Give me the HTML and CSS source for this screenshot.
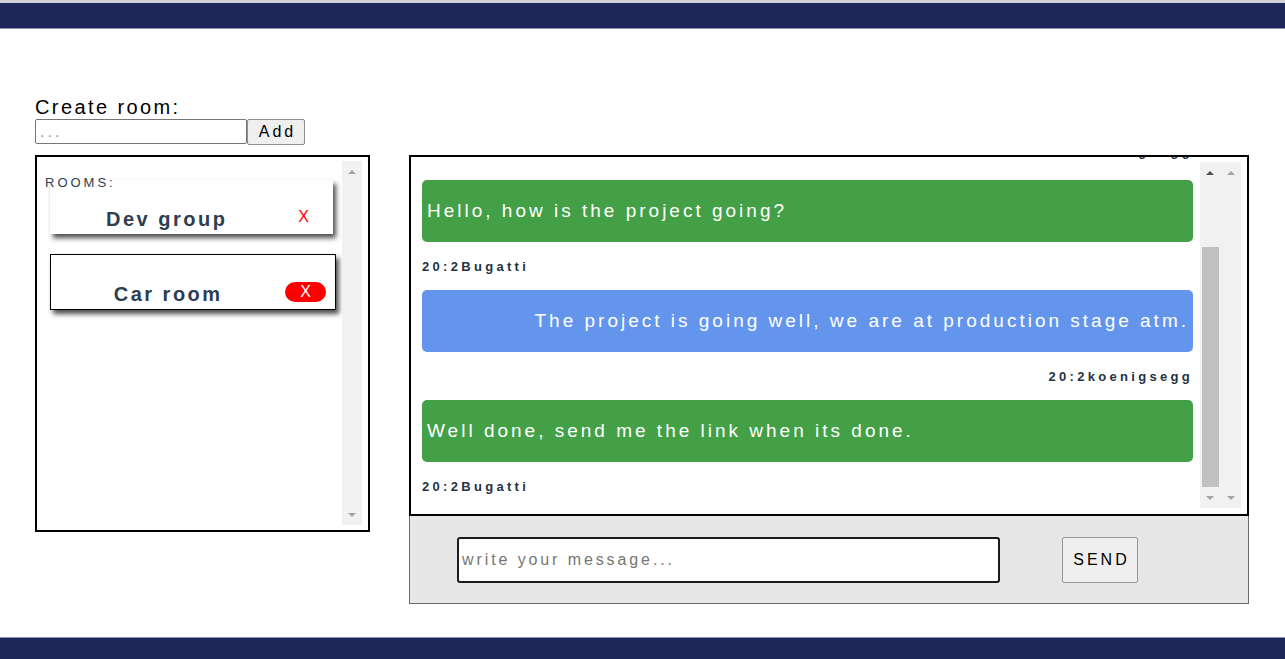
FILE: index.html
```html
<!DOCTYPE html>
<html lang="en">
<head>
<meta charset="utf-8">
<title>Chat</title>
<link rel="stylesheet" href="styles.css">
</head>
<body>
<div class="topstrip"></div>
<header class="topbar"></header>
<main class="main">
  <form class="create">
    <label class="create-label" for="room">Create room:</label>
    <div class="create-row">
      <input id="room" class="create-input" type="text" placeholder="...">
      <button type="button" class="add-btn">Add</button>
    </div>
  </form>
  <div class="panels">
    <section class="rooms">
      <div class="rooms-list">
        <p class="rooms-title">ROOMS:</p>
        <div class="room">
          <h3 class="room-name">Dev group</h3>
          <button type="button" class="room-del">X</button>
        </div>
        <div class="room room-active">
          <h3 class="room-name">Car room</h3>
          <button type="button" class="room-del">X</button>
        </div>
      </div>
      <div class="vscroll vscroll-rooms">
        <span class="sb-btn"><i class="tri tri-up"></i></span>
        <span class="sb-track"></span>
        <span class="sb-btn"><i class="tri tri-down"></i></span>
      </div>
    </section>
    <section class="chat">
      <div class="chat-box">
        <div class="messages">
          <div class="meta meta-right meta-top">20:2koenigsegg</div>
          <div class="msg msg-other">
            <div class="bubble bubble-green">Hello, how is the project going?</div>
            <div class="meta">20:2Bugatti</div>
          </div>
          <div class="msg msg-me">
            <div class="bubble bubble-blue">The project is going well, we are at production stage atm.</div>
            <div class="meta meta-right">20:2koenigsegg</div>
          </div>
          <div class="msg msg-other">
            <div class="bubble bubble-green">Well done, send me the link when its done.</div>
            <div class="meta">20:2Bugatti</div>
          </div>
        </div>
        <div class="vscroll vscroll-chat">
          <span class="sb-btn"><i class="tri tri-up tri-dark"></i></span>
          <span class="sb-track"><span class="sb-thumb"></span></span>
          <span class="sb-btn"><i class="tri tri-down"></i></span>
        </div>
        <div class="vscroll vscroll-chat">
          <span class="sb-btn"><i class="tri tri-up"></i></span>
          <span class="sb-track"></span>
          <span class="sb-btn"><i class="tri tri-down"></i></span>
        </div>
      </div>
      <div class="composer">
        <input class="msg-input" type="text" placeholder="write your message...">
        <button type="button" class="send-btn">SEND</button>
      </div>
    </section>
  </div>
</main>
<footer class="bottombar"></footer>
</body>
</html>
```
FILE: styles.css
```css
* { box-sizing: border-box; }
html, body { margin: 0; height: 100%; }
body {
  font-family: "Liberation Sans", Arial, sans-serif;
  background: #fff;
  color: #000;
  display: flex;
  flex-direction: column;
  min-height: 100vh;
  overflow: hidden;
}
.topstrip { height: 3px; background: #d2d2d2; flex: none; }
.topbar { height: 26px; background: #1e2759; border-bottom: 1px solid #8e93ae; flex: none; }
.bottombar { height: 22px; background: #1e2759; border-top: 1px solid #8e93ae; flex: none; }
.main { flex: 1; padding: 66px 0 0 35px; }

.create { margin: 0; }
.create-label { display: block; font-size: 20px; line-height: 24px; letter-spacing: 2.4px; }
.create-row { display: flex; align-items: flex-start; }
.create-input {
  width: 212px; height: 25px; margin: 0;
  border: 1px solid #767676; border-radius: 2px;
  padding: 0 4px; font: 16px "Liberation Sans", Arial, sans-serif; letter-spacing: 3px;
}
.create-input::placeholder { color: #9a9a9a; }
.add-btn {
  width: 58px; height: 26px; margin: 0;
  border: 1px solid #8f8f8f; border-radius: 2px; background: #efefef;
  font: 16px "Liberation Sans", Arial, sans-serif; letter-spacing: 3px; color: #000;
  padding: 0 0 0 3px;
}

.panels { display: flex; align-items: flex-start; gap: 39px; margin-top: 10px; }

.rooms {
  width: 335px; height: 377px; border: 2px solid #000;
  display: flex; padding: 4px 6px 5px 0;
}
.rooms-list { flex: 1; padding: 14px 0 0 8px; }
.rooms-title {
  margin: 0; font-size: 13px; line-height: 15px; letter-spacing: 3px; color: #2c3e50;
}
.room {
  display: flex; align-items: flex-end;
  width: 283px; height: 54px; margin: -10px 0 0 5px;
  background: #fff; box-shadow: 3px 4px 5px rgba(0,0,0,0.7);
}
.room + .room { margin-top: 20px; }
.room-active { width: 286px; height: 56px; border: 1px solid #000; }
.room-name {
  flex: 1; margin: 0; padding-bottom: 3px; text-align: center;
  font-size: 20px; line-height: 23px; font-weight: bold; letter-spacing: 2.5px; color: #2c3e50;
}
.room-del {
  height: 20px; margin: 0 9px 7px 0; padding: 0 15px;
  border: none; border-radius: 10px; background: transparent;
  font: 16px/20px "Liberation Sans", Arial, sans-serif; color: #ff0000;
}
.room-active .room-del { background: #ff0000; color: #fff; }

.vscroll { width: 20px; background: #f1f1f1; display: flex; flex-direction: column; flex: none; }
.vscroll-rooms { width: 20px; }
.vscroll-chat { margin: 5px 0 6px; }
.vscroll-chat + .vscroll-chat { width: 21px; }
.sb-btn { height: 21px; display: flex; align-items: center; justify-content: center; flex: none; }
.sb-track { flex: 1; display: flex; flex-direction: column; justify-content: flex-end; }
.sb-thumb { height: 240px; margin: 0 1px 0 2px; background: #c1c1c1; }
.tri { display: block; width: 0; height: 0; border-left: 4px solid transparent; border-right: 4px solid transparent; }
.tri-up { border-bottom: 4px solid #a3a3a3; }
.tri-down { border-top: 4px solid #a3a3a3; }
.tri-up.tri-dark { border-bottom-color: #505050; }

.chat { width: 840px; }
.chat-box { height: 361px; border: 2px solid #000; display: flex; padding-right: 6px; }
.messages {
  flex: 1; overflow: hidden; display: flex; flex-direction: column; justify-content: flex-end;
  padding: 0 7px 4px 11px;
}
.msg { flex: none; }
.bubble {
  height: 62px; display: flex; align-items: center; margin-bottom: 17px;
  padding: 0 5px; border-radius: 5px; color: #fff;
  font-size: 19px; letter-spacing: 3px; white-space: nowrap;
}
.bubble-green { background: #43a047; }
.bubble-blue { background: #6495ed; justify-content: flex-end; padding-right: 4px; }
.meta {
  flex: none;
  font-size: 13px; line-height: 16px; font-weight: bold; letter-spacing: 3.3px; color: #243342;
  margin-bottom: 15px;
}
.meta-right { text-align: right; }
.meta-top { margin-bottom: 20px; }

.composer {
  height: 88px; background: #e7e7e7;
  border: 1px solid #6b6b6b; border-top: 0;
  display: flex; align-items: center; gap: 62px; padding-left: 47px;
}
.msg-input {
  width: 543px; height: 46px; margin: 0;
  border: 2px solid #1c1c1c; border-radius: 3px; background: #fff;
  padding: 0 3px; font: 16px "Liberation Sans", Arial, sans-serif; letter-spacing: 2.9px;
}
.msg-input::placeholder { color: #767676; }
.send-btn {
  width: 76px; height: 46px; margin: 0;
  border: 1px solid #999; border-radius: 2px; background: #efefef;
  font: 16px "Liberation Sans", Arial, sans-serif; letter-spacing: 3px; color: #000;
  padding: 0 0 0 3px;
}
```
